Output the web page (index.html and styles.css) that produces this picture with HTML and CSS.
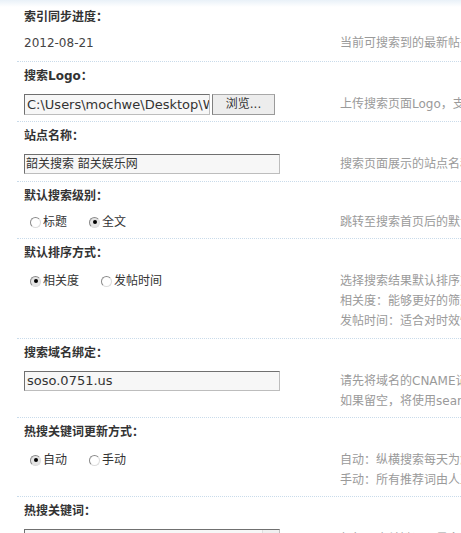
FILE: index.html
```html
<!DOCTYPE html>
<html lang="zh-CN">
<head>
<meta charset="utf-8">
<title>纵横搜索设置</title>
<link rel="stylesheet" href="styles.css">
</head>
<body>
<div class="page">

  <section class="row row-first">
    <div class="title">索引同步进度：</div>
    <div class="body body-first">
      <div class="field"><span class="value">2012-08-21</span></div>
      <div class="tips">当前可搜索到的最新帖子的发布日期</div>
    </div>
  </section>

  <section class="row">
    <div class="title">搜索Logo：</div>
    <div class="body">
      <div class="field file-field">
        <div class="txt txt-file"><span class="txt-val">C:\Users\mochwe\Desktop\WeChat.png</span></div>
        <div class="btn">浏览...</div>
      </div>
      <div class="tips">上传搜索页面Logo，支持jpg、gif、png格式</div>
    </div>
  </section>

  <section class="row">
    <div class="title">站点名称：</div>
    <div class="body body-pb7">
      <div class="field"><div class="txt txt-cjk"><span class="txt-val">韶关搜索 韶关娱乐网</span></div></div>
      <div class="tips">搜索页面展示的站点名称</div>
    </div>
  </section>

  <section class="row">
    <div class="title">默认搜索级别：</div>
    <div class="body body-radio">
      <div class="field">
        <div class="radios">
          <span class="opt"><span class="radio"></span>标题</span>
          <span class="opt"><span class="radio on"></span>全文</span>
        </div>
      </div>
      <div class="tips">跳转至搜索首页后的默认搜索级别</div>
    </div>
  </section>

  <section class="row">
    <div class="title">默认排序方式：</div>
    <div class="body body-pb7">
      <div class="field">
        <div class="radios">
          <span class="opt"><span class="radio on"></span>相关度</span>
          <span class="opt"><span class="radio"></span>发帖时间</span>
        </div>
      </div>
      <div class="tips">
        <div>选择搜索结果默认排序方式</div>
        <div>相关度：能够更好的筛选出最匹配的结果</div>
        <div>发帖时间：适合对时效性要求高的站点</div>
      </div>
    </div>
  </section>

  <section class="row">
    <div class="title">搜索域名绑定：</div>
    <div class="body">
      <div class="field"><div class="txt"><span class="txt-val">soso.0751.us</span></div></div>
      <div class="tips">
        <div>请先将域名的CNAME记录指向search.discuz.qq.com</div>
        <div>如果留空，将使用search.discuz.qq.com</div>
      </div>
    </div>
  </section>

  <section class="row">
    <div class="title">热搜关键词更新方式：</div>
    <div class="body">
      <div class="field">
        <div class="radios">
          <span class="opt"><span class="radio on"></span>自动</span>
          <span class="opt"><span class="radio"></span>手动</span>
        </div>
      </div>
      <div class="tips">
        <div>自动：纵横搜索每天为您更新热搜关键词</div>
        <div>手动：所有推荐词由人工设置</div>
      </div>
    </div>
  </section>

  <section class="row row-last">
    <div class="title">热搜关键词：</div>
    <div class="body">
      <div class="field">
        <div class="area"><span class="scroll"></span></div>
      </div>
      <div class="tips">每行一个关键词，最多设置十个</div>
    </div>
  </section>

</div>
</body>
</html>
```

FILE: styles.css
```css
html, body {
  margin: 0;
  padding: 0;
  overflow: hidden;
}

body {
  width: 461px;
  height: 533px;
  background: #fff linear-gradient(#e9f1f8, #ffffff 7px) no-repeat;
  font-family: "DejaVu Sans", "Noto Sans CJK SC", sans-serif;
  font-size: 12px;
  line-height: 20px;
  color: #333;
}

.page {
  padding: 3px 0 0 17px;
}

.row {
  border-bottom: 1px dotted #c9dbea;
}

.row-last {
  border-bottom: 0;
}

.title {
  height: 28px;
  line-height: 28px;
  padding-left: 7px;
  font-weight: bold;
  color: #333;
  white-space: nowrap;
}

.body {
  display: grid;
  grid-template-columns: 316px minmax(0, 1fr);
  padding: 4px 0 6px 7px;
}

.body-first {
  padding-top: 2px;
  padding-bottom: 8px;
}

.body-pb7 {
  padding-bottom: 7px;
}

.body-radio {
  padding-top: 2px;
  padding-bottom: 6px;
}

.field {
  min-width: 0;
}

.value {
  color: #444;
}

.tips {
  color: #9a9a9a;
  white-space: nowrap;
  line-height: 20px;
}

.file-field {
  display: flex;
  gap: 2px;
}

.txt {
  box-sizing: border-box;
  width: 256px;
  height: 20px;
  border: 1px solid;
  border-color: #707070 #bdbdbd #bdbdbd #707070;
  background: #f7f7f7;
  overflow: hidden;
  white-space: nowrap;
  font-size: 13px;
  line-height: 18px;
  color: #333;
  padding-left: 2px;
}

.txt-file {
  width: 186px;
  height: 21px;
  line-height: 19px;
}

.txt-cjk {
  font-size: 12px;
  padding-left: 1px;
}

.btn {
  box-sizing: border-box;
  width: 63px;
  height: 21px;
  border: 1px solid;
  border-color: #a8a8a8 #9a9a9a #9a9a9a #808080;
  background: #ededed;
  color: #333;
  text-align: center;
  line-height: 19px;
  font-size: 12px;
}

.radios {
  display: flex;
  align-items: center;
  height: 20px;
  padding-left: 6px;
}

.opt {
  display: inline-flex;
  align-items: center;
  margin-right: 22px;
  color: #333;
}

.radio {
  box-sizing: border-box;
  position: relative;
  width: 11px;
  height: 11px;
  margin-right: 2px;
  border-radius: 50%;
  border: 1px solid;
  border-color: #8a8a8a #dcdcdc #dcdcdc #8a8a8a;
  background: #fff;
}

.radio.on {
  background: #e4e4e4;
}

.radio.on::after {
  content: "";
  position: absolute;
  left: 2.5px;
  top: 2.5px;
  width: 4px;
  height: 4px;
  border-radius: 50%;
  background: #000;
}

.area {
  box-sizing: border-box;
  position: relative;
  width: 256px;
  height: 60px;
  border: 1px solid;
  border-color: #707070 #bdbdbd #bdbdbd #707070;
  background: #f7f7f7;
}

.scroll {
  position: absolute;
  right: 0;
  top: 0;
  width: 16px;
  height: 100%;
  background: #f0f0f0;
  border-left: 1px solid #dedede;
}
```
